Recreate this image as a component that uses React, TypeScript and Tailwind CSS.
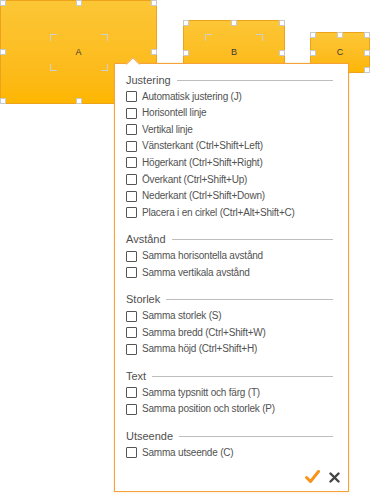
type Section = { title: string; items: string[] }

const sections: Section[] = [
  {
    title: 'Justering',
    items: [
      'Automatisk justering (J)',
      'Horisontell linje',
      'Vertikal linje',
      'Vänsterkant (Ctrl+Shift+Left)',
      'Högerkant (Ctrl+Shift+Right)',
      'Överkant (Ctrl+Shift+Up)',
      'Nederkant (Ctrl+Shift+Down)',
      'Placera i en cirkel (Ctrl+Alt+Shift+C)',
    ],
  },
  { title: 'Avstånd', items: ['Samma horisontella avstånd', 'Samma vertikala avstånd'] },
  {
    title: 'Storlek',
    items: ['Samma storlek (S)', 'Samma bredd (Ctrl+Shift+W)', 'Samma höjd (Ctrl+Shift+H)'],
  },
  { title: 'Text', items: ['Samma typsnitt och färg (T)', 'Samma position och storlek (P)'] },
  { title: 'Utseende', items: ['Samma utseende (C)'] },
]

function Handle({ className }: { className: string }) {
  return <div className={`absolute w-[6px] h-[6px] bg-white border border-[#c9c9c9] ${className}`} />
}

function Bracket({ className }: { className: string }) {
  return (
    <div className={`absolute ${className}`}>
      <div className="absolute left-0 top-0 w-[7px] h-[7px] border-l border-t border-[#cfcfcf]" />
      <div className="absolute right-0 top-0 w-[7px] h-[7px] border-r border-t border-[#cfcfcf]" />
      <div className="absolute left-0 bottom-0 w-[7px] h-[7px] border-l border-b border-[#cfcfcf]" />
      <div className="absolute right-0 bottom-0 w-[7px] h-[7px] border-r border-b border-[#cfcfcf]" />
    </div>
  )
}

// a selected shape on the canvas, with its resize handles
function Shape({ label, className, bracket }: { label: string; className: string; bracket?: string }) {
  return (
    <div
      className={`absolute border border-[#eda21c] bg-gradient-to-b from-[#fcc635] to-[#fdb600] flex items-center justify-center ${className}`}
    >
      {bracket && <Bracket className={bracket} />}
      <span className="text-[9px] text-[#3a3a3a] leading-none">{label}</span>
      <Handle className="left-[-1px] top-[-1px]" />
      <Handle className="left-1/2 -translate-x-1/2 top-[-1px]" />
      <Handle className="right-[-1px] top-[-1px]" />
      <Handle className="left-[-1px] top-1/2 -translate-y-1/2" />
      <Handle className="right-[-1px] top-1/2 -translate-y-1/2" />
      <Handle className="left-[-1px] bottom-[-1px]" />
      <Handle className="left-1/2 -translate-x-1/2 bottom-[-1px]" />
      <Handle className="right-[-1px] bottom-[-1px]" />
    </div>
  )
}

export default function App() {
  return (
    <div className="relative w-[370px] h-[500px] bg-white overflow-hidden font-['Liberation_Sans',Arial,sans-serif]">
      <Shape label="A" className="left-0 top-0 w-[157px] h-[104px]" bracket="left-[49px] top-[33px] w-[58px] h-[37px]" />
      <Shape label="B" className="left-[183px] top-[20px] w-[102px] h-[65px]" bracket="left-[21px] top-[13px] w-[58px] h-[37px]" />
      <Shape label="C" className="left-[310px] top-[32px] w-[60px] h-[41px]" />

      {/* alignment popup */}
      <div className="absolute left-[114px] top-[63px] w-[235px] h-[429px] bg-white border border-[#f7a238] shadow-[0_0_2px_rgba(247,162,56,0.35)]">
        <div className="absolute left-[13px] top-[-5px] w-[10px] h-[10px] rotate-45 bg-white border-l border-t border-[#f7a238]" />
        <div className="relative flex flex-col pt-[7.5px] pl-[11px] pr-[15px]">
          {sections.map((s, i) => (
            <div key={s.title} className={i > 0 ? 'mt-[10px]' : ''}>
              <div className="flex items-center h-[17px] gap-[6px]">
                <span className="text-[11px] text-[#505050] leading-none">{s.title}</span>
                <div className="flex-1 h-px bg-[#bdbdbd]" />
              </div>
              {s.items.map((item) => (
                <div key={item} className="flex items-center h-[16.55px] gap-[5px]">
                  <div className="w-[11px] h-[11px] border border-[#555] rounded-[1px] bg-white shrink-0" />
                  <span className="text-[10px] tracking-[-0.2px] text-[#525252] leading-none whitespace-nowrap">{item}</span>
                </div>
              ))}
            </div>
          ))}
          <div className="mt-[8px] h-[16px] flex justify-end items-center gap-[9px] mr-[-7px]">
            <svg width="15" height="14" viewBox="0 0 15 14">
              <path d="M1.5 7.5 L5.5 11.5 L13.5 1.5" fill="none" stroke="#f7941d" strokeWidth="3" strokeLinecap="round" strokeLinejoin="round" />
            </svg>
            <svg width="11" height="11" viewBox="0 0 11 11">
              <path d="M1.5 1.5 L9.5 9.5 M9.5 1.5 L1.5 9.5" fill="none" stroke="#444" strokeWidth="2.4" strokeLinecap="round" />
            </svg>
          </div>
        </div>
      </div>
    </div>
  )
}
